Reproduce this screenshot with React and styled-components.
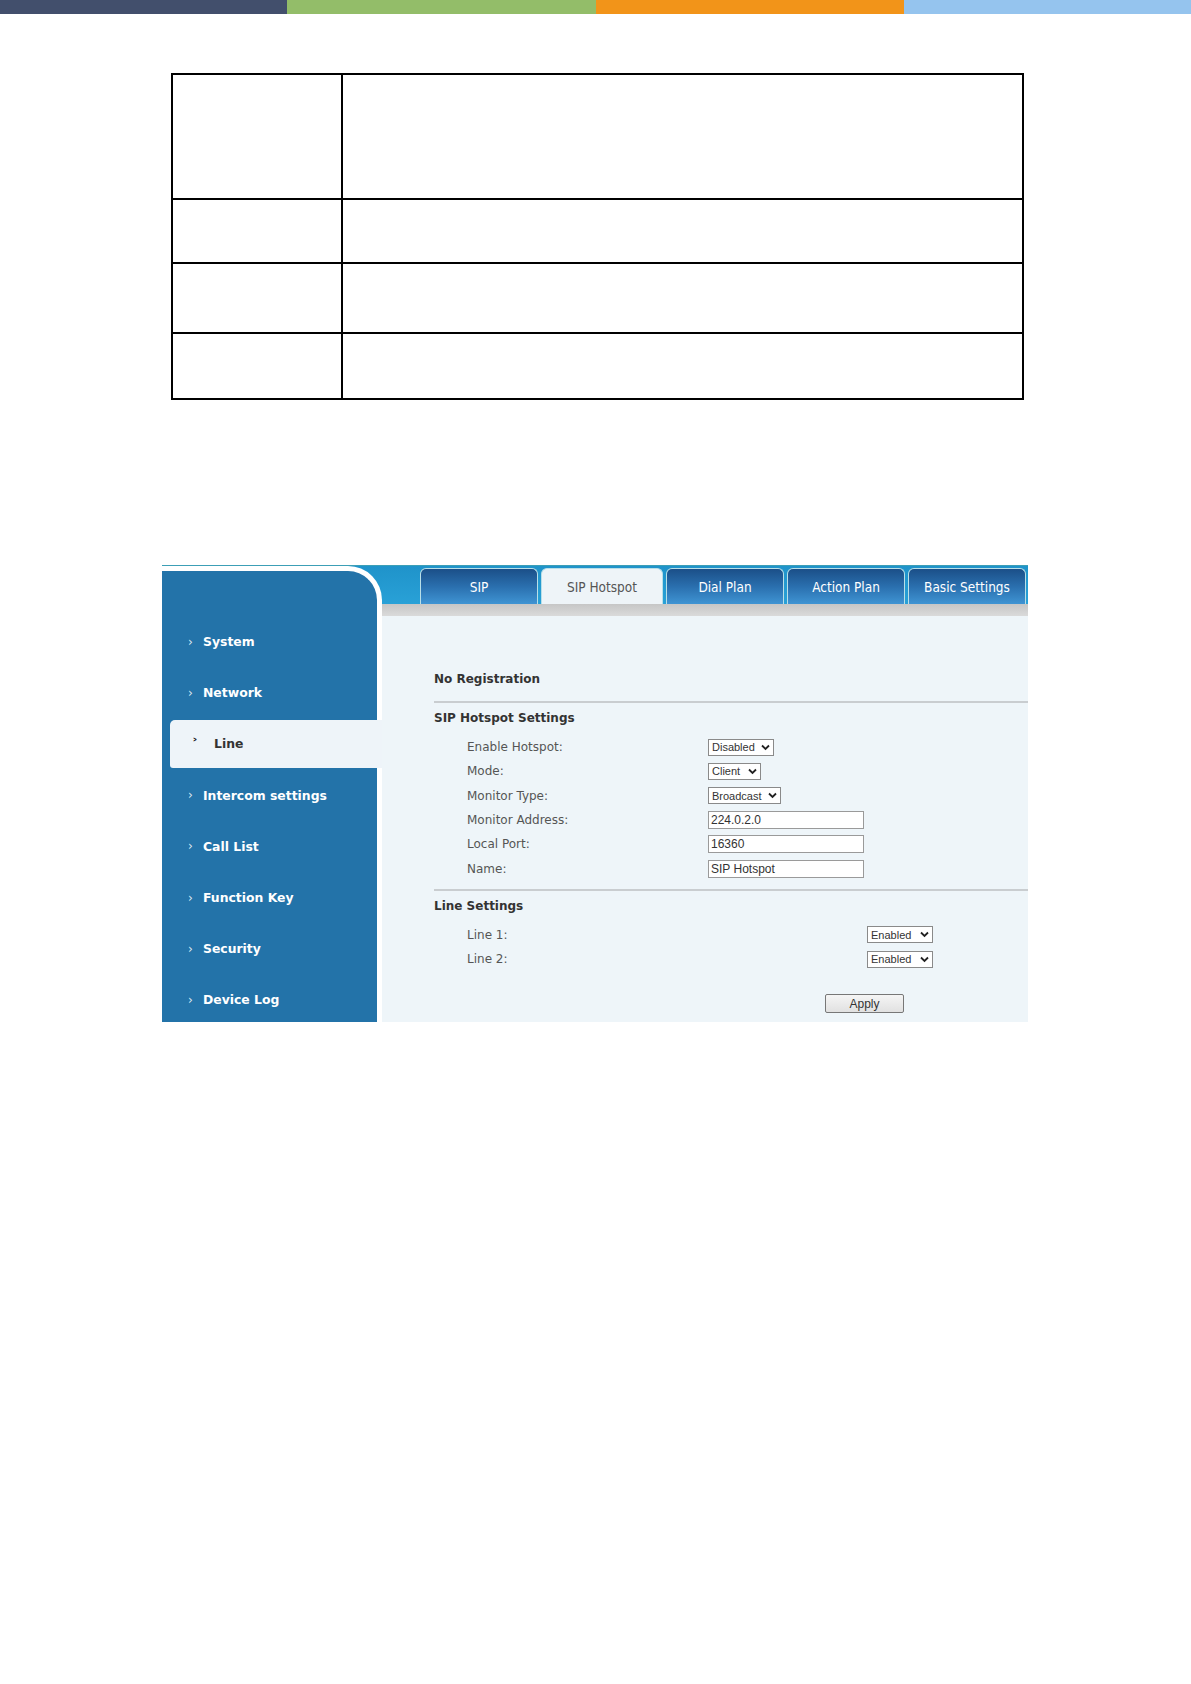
import React from "react";
import styled, { createGlobalStyle } from "styled-components";

const Global = createGlobalStyle`
  html, body { margin: 0; padding: 0; background: #fff; }
  body { font-family: "DejaVu Sans", Verdana, sans-serif; }
`;

const Page = styled.div`
  width: 1191px;
  min-height: 1684px;
  background: #fff;
`;

const ColorBar = styled.div`
  display: grid;
  grid-template-columns: 287px 309px 308px 287px;
  height: 14px;
`;

const Segment = styled.div`
  background: ${(p) => p.$c};
`;

const Table = styled.table`
  margin: 59px 0 0 171px;
  width: 853px;
  border-collapse: collapse;
  border: 2px solid #000;
`;

const Cell = styled.td`
  border: 2px solid #000;
  height: ${(p) => p.$h}px;
  width: ${(p) => (p.$first ? "168px" : "auto")};
  padding: 0;
`;

const Frame = styled.div`
  margin: 165px 0 0 162px;
  width: 866px;
  height: 457px;
  display: flex;
  border-top: 1px solid #3c9fb6;
  box-sizing: border-box;
  font-family: "DejaVu Sans", Verdana, sans-serif;
`;

const SideCol = styled.div`
  width: 220px;
  flex: none;
  background: linear-gradient(to bottom, #1f93ca 0, #28a0d6 38px, #eef5f9 38px);
  display: flex;
`;

const Sidebar = styled.nav`
  flex: 1;
  background: #2373a9;
  border-top: 5px solid #fff;
  border-right: 5px solid #fff;
  border-top-right-radius: 34px;
  padding-top: 45px;
  display: flex;
  flex-direction: column;
`;

const NavItem = styled.div`
  height: 51.2px;
  flex: none;
  display: flex;
  align-items: center;
  margin-left: ${(p) => (p.$active ? "8px" : "0")};
  margin-right: ${(p) => (p.$active ? "-5px" : "0")};
  padding-left: ${(p) => (p.$active ? "22px" : "26px")};
  background: ${(p) => (p.$active ? "#eef4f9" : "transparent")};
  border-radius: ${(p) => (p.$active ? "5px 0 0 3px" : "0")};
  color: ${(p) => (p.$active ? "#333" : "#fff")};
  font-weight: bold;
  font-size: 12.4px;
  box-sizing: border-box;
  ${(p) => (p.$active ? "height: 47.2px; margin-top: 2px; margin-bottom: 2px;" : "")}
`;

const Chevron = styled.span`
  width: ${(p) => (p.$active ? "22px" : "15px")};
  font-size: 12px;
  font-weight: ${(p) => (p.$active ? "bold" : "normal")};
  color: ${(p) => (p.$active ? "#111" : "#dfe9f2")};
`;

const Main = styled.div`
  flex: 1;
  display: flex;
  flex-direction: column;
  min-width: 0;
`;

const TabBar = styled.div`
  height: 38px;
  background: linear-gradient(to bottom, #1f93ca, #29a1d7);
  display: flex;
  align-items: flex-end;
  gap: 3px;
  padding-left: 38px;
  box-sizing: border-box;
`;

const Tab = styled.div`
  width: ${(p) => p.$w}px;
  height: 36px;
  box-sizing: border-box;
  border: 1px solid #b9dfe8;
  border-bottom: none;
  border-radius: 6px 6px 0 0;
  display: flex;
  align-items: center;
  justify-content: center;
  font-family: "DejaVu Sans Condensed", "DejaVu Sans", sans-serif;
  font-size: 13.5px;
  color: ${(p) => (p.$active ? "#555" : "#fff")};
  background: ${(p) =>
    p.$active ? "#eef4f8" : "linear-gradient(to bottom, #1b4f88 0%, #2a6fae 50%, #3f94d3 100%)"};
`;

const GrayBar = styled.div`
  height: 12px;
  background: linear-gradient(to bottom, #c6c6c6, #dadada);
`;

const Content = styled.div`
  flex: 1;
  background: #eef5f9;
  padding: 53px 0 0 52px;
`;

const Heading = styled.div`
  font-size: 12px;
  font-weight: bold;
  color: #333;
  line-height: 20px;
  margin-top: ${(p) => p.$mt || 0}px;
`;

const Divider = styled.div`
  height: 2px;
  background: #c9cdd0;
  margin-top: ${(p) => p.$mt}px;
`;

const Rows = styled.div`
  margin-top: 7px;
  padding-left: 33px;
`;

const Row = styled.div`
  display: grid;
  grid-template-columns: ${(p) => p.$lw}px 1fr;
  align-items: center;
  height: 24.3px;
`;

const Label = styled.span`
  font-size: 12px;
  color: #555;
`;

const Select = styled.div`
  display: inline-flex;
  align-items: center;
  justify-content: space-between;
  gap: 4px;
  width: ${(p) => p.$w}px;
  height: 17px;
  box-sizing: border-box;
  border: 1px solid #8a8a8a;
  background: #fff;
  padding: 0 3px 0 3px;
  font-family: "Liberation Sans", Arial, sans-serif;
  font-size: 11px;
  color: #333;
  justify-self: start;
`;

const Input = styled.div`
  width: 156px;
  height: 18px;
  box-sizing: border-box;
  border: 1px solid #9a9a9a;
  background: #fff;
  padding: 0 2px;
  display: flex;
  align-items: center;
  font-family: "Liberation Sans", Arial, sans-serif;
  font-size: 12px;
  color: #333;
`;

const ButtonRow = styled.div`
  margin-top: 23px;
  padding-left: 391px;
`;

const Button = styled.div`
  width: 79px;
  height: 19px;
  box-sizing: border-box;
  border: 1px solid #777;
  border-radius: 2px;
  background: linear-gradient(to bottom, #f5f5f5, #e1e1e1);
  display: flex;
  align-items: center;
  justify-content: center;
  font-family: "Liberation Sans", Arial, sans-serif;
  font-size: 12px;
  color: #333;
`;

const Caret = () => (
  <svg width="9" height="7" viewBox="0 0 9 7">
    <polyline points="1,1.5 4.5,5 8,1.5" fill="none" stroke="#222" strokeWidth="1.8" />
  </svg>
);

const nav = ["System", "Network", "Line", "Intercom settings", "Call List", "Function Key", "Security", "Device Log"];
const tabs = [
  ["SIP", 118],
  ["SIP Hotspot", 122],
  ["Dial Plan", 118],
  ["Action Plan", 118],
  ["Basic Settings", 118],
];

export default function App() {
  return (
    <Page>
      <Global />
      <ColorBar>
        <Segment $c="#424f6c" />
        <Segment $c="#93bd69" />
        <Segment $c="#f29419" />
        <Segment $c="#95c4ee" />
      </ColorBar>
      <Table>
        <tbody>
          {[123, 62, 68, 64].map((h, i) => (
            <tr key={i}>
              <Cell $h={h} $first />
              <Cell $h={h} />
            </tr>
          ))}
        </tbody>
      </Table>
      <Frame>
        <SideCol>
          <Sidebar>
            {nav.map((n) => (
              <NavItem key={n} $active={n === "Line"}>
                <Chevron $active={n === "Line"}>{n === "Line" ? "˃" : "›"}</Chevron>
                {n}
              </NavItem>
            ))}
          </Sidebar>
        </SideCol>
        <Main>
          <TabBar>
            {tabs.map(([t, w]) => (
              <Tab key={t} $w={w} $active={t === "SIP Hotspot"}>
                {t}
              </Tab>
            ))}
          </TabBar>
          <GrayBar />
          <Content>
            <Heading>No Registration</Heading>
            <Divider $mt={12} />
            <Heading $mt={5}>SIP Hotspot Settings</Heading>
            <Rows>
              <Row $lw={241}>
                <Label>Enable Hotspot:</Label>
                <Select $w={66}>Disabled<Caret /></Select>
              </Row>
              <Row $lw={241}>
                <Label>Mode:</Label>
                <Select $w={53}>Client<Caret /></Select>
              </Row>
              <Row $lw={241}>
                <Label>Monitor Type:</Label>
                <Select $w={73}>Broadcast<Caret /></Select>
              </Row>
              <Row $lw={241}>
                <Label>Monitor Address:</Label>
                <Input>224.0.2.0</Input>
              </Row>
              <Row $lw={241}>
                <Label>Local Port:</Label>
                <Input>16360</Input>
              </Row>
              <Row $lw={241}>
                <Label>Name:</Label>
                <Input>SIP Hotspot</Input>
              </Row>
            </Rows>
            <Divider $mt={8} />
            <Heading $mt={5}>Line Settings</Heading>
            <Rows>
              <Row $lw={400}>
                <Label>Line 1:</Label>
                <Select $w={66}>Enabled<Caret /></Select>
              </Row>
              <Row $lw={400}>
                <Label>Line 2:</Label>
                <Select $w={66}>Enabled<Caret /></Select>
              </Row>
            </Rows>
            <ButtonRow>
              <Button>Apply</Button>
            </ButtonRow>
          </Content>
        </Main>
      </Frame>
    </Page>
  );
}
